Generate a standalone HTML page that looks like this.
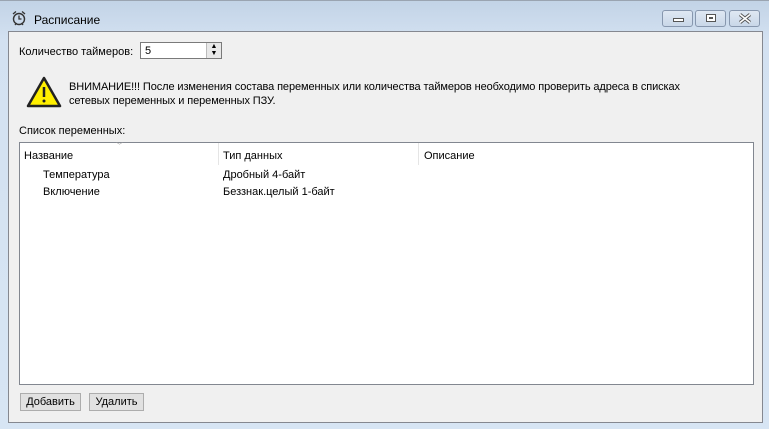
<!DOCTYPE html>
<html><head><meta charset="utf-8"><style>
*{margin:0;padding:0;box-sizing:border-box}
body{width:769px;height:429px;overflow:hidden;font-family:"Liberation Sans","DejaVu Sans",sans-serif;font-size:11px;color:#000;position:relative;background:linear-gradient(#c2d3e6,#d3e1f1 40px,#d7e5f4)}
.abs{position:absolute}
.panel{left:8px;top:31px;width:755px;height:392px;background:#f0f0f0;border:1px solid #858890}
.btn{border:1px solid #adadad;background:#e1e1e1;height:18px;line-height:16px;text-align:center;font-size:11px}
.wb{top:10px;height:17px;border:1px solid #8797ae;border-radius:3px;background:linear-gradient(#dfe8f3,#c9d7e8)}
</style></head><body>
<div class="abs" style="left:0;top:0;width:769px;height:1px;background:#9aa4b1"></div>
<svg class="abs" style="left:11px;top:10px" width="16" height="16" viewBox="0 0 16 16"><circle cx="8" cy="9" r="5.5" fill="none" stroke="#333" stroke-width="1.4"/><path d="M8 5.5V9h2.5M2 4l3-2.5M14 4l-3-2.5M4 15l1.5-2M12 15l-1.5-2" stroke="#333" stroke-width="1.3" fill="none"/></svg>
<div class="abs" style="left:34px;top:13px;font-size:12px">Расписание</div>
<div class="abs wb" style="left:662px;width:31px"><div class="abs" style="left:10px;top:7px;width:11px;height:4px;border:1px solid #555;background:#fff"></div></div>
<div class="abs wb" style="left:695px;width:31px"><div class="abs" style="left:10px;top:3px;width:10px;height:8px;border:1px solid #555;background:#fff"><div style="margin:2px;height:2px;border:1px solid #555"></div></div></div>
<div class="abs wb" style="left:729px;width:31px"><svg class="abs" style="left:8px;top:2px" width="14" height="11" viewBox="0 0 14 11"><path d="M2 1.5L12 9.5M12 1.5L2 9.5" stroke="#555" stroke-width="3.5"/><path d="M2 1.5L12 9.5M12 1.5L2 9.5" stroke="#fff" stroke-width="1.6"/></svg></div>
<div class="abs panel"></div>
<div class="abs" style="left:19px;top:46px">Количество таймеров:</div>
<div class="abs" style="left:140px;top:42px;width:82px;height:17px;border:1px solid #7a7a7a;background:#fff"><span class="abs" style="left:4px;top:2px">5</span>
<div class="abs" style="left:65px;top:0;width:15px;height:15px;background:#e8e8e8;border-left:1px solid #bbb;font-size:7px;line-height:7px;text-align:center">▲<br>▼</div></div>
<svg class="abs" style="left:26px;top:76px" width="36" height="32" viewBox="0 0 36 32"><path d="M18 2L34 30H2Z" fill="#ffef00" stroke="#222" stroke-width="2.5" stroke-linejoin="round"/><path d="M18 11v10" stroke="#222" stroke-width="2.5"/><circle cx="18" cy="25" r="1.5" fill="#222"/></svg>
<div class="abs" style="left:69px;top:80px;line-height:14px;letter-spacing:-0.1px">ВНИМАНИЕ!!! После изменения состава переменных или количества таймеров необходимо проверить адреса в списках<br>сетевых переменных и переменных ПЗУ.</div>
<div class="abs" style="left:19px;top:125px">Список переменных:</div>
<div class="abs" style="left:19px;top:142px;width:735px;height:243px;background:#fff;border:1px solid #828790"></div>
<div class="abs" style="left:218px;top:143px;width:1px;height:22px;background:#e5e5e5"></div>
<div class="abs" style="left:418px;top:143px;width:1px;height:22px;background:#e5e5e5"></div>
<div class="abs" style="left:116px;top:141px;font-size:7px;color:#999">﹀</div>
<div class="abs" style="left:24px;top:150px">Название</div>
<div class="abs" style="left:223px;top:150px">Тип данных</div>
<div class="abs" style="left:424px;top:150px">Описание</div>
<div class="abs" style="left:43px;top:169px">Температура</div>
<div class="abs" style="left:223px;top:169px">Дробный 4-байт</div>
<div class="abs" style="left:43px;top:186px">Включение</div>
<div class="abs" style="left:223px;top:186px">Беззнак.целый 1-байт</div>
<div class="abs btn" style="left:20px;top:393px;width:61px">Добавить</div>
<div class="abs btn" style="left:89px;top:393px;width:55px">Удалить</div>
</body></html>
